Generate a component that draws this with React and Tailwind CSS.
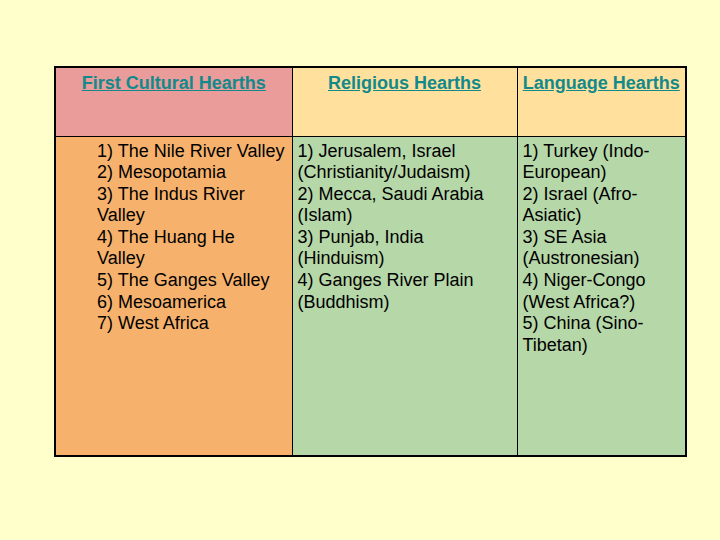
export default function App() {
  const cultural = [
    "1) The Nile River Valley",
    "2) Mesopotamia",
    "3) The Indus River Valley",
    "4) The Huang He Valley",
    "5) The Ganges Valley",
    "6) Mesoamerica",
    "7) West Africa",
  ];
  const religious = [
    "1) Jerusalem, Israel (Christianity/Judaism)",
    "2) Mecca, Saudi Arabia (Islam)",
    "3) Punjab, India (Hinduism)",
    "4) Ganges River Plain (Buddhism)",
  ];
  const language = [
    "1) Turkey (Indo-European)",
    "2) Israel (Afro-Asiatic)",
    "3) SE Asia (Austronesian)",
    "4) Niger-Congo (West Africa?)",
    "5) China (Sino-Tibetan)",
  ];

  const head = "font-bold underline text-[#12898a] text-center align-top pt-[5px] border border-black";
  const body = "align-top pt-[4px] border border-black";

  return (
    <div className="w-[720px] h-[540px] bg-[#ffffcc] pt-[66px] pl-[54px] font-['Liberation_Sans',Arial,sans-serif] text-[18px] leading-[1.2] text-black">
      <table className="table-fixed border-collapse border-2 border-black w-[631px]">
        <colgroup>
          <col className="w-[237px]" />
          <col className="w-[225px]" />
          <col className="w-[169px]" />
        </colgroup>
        <thead>
          <tr className="h-[69px]">
            <th className={`${head} bg-[#e99c9a]`}>First Cultural Hearths</th>
            <th className={`${head} bg-[#ffe09c]`}>Religious Hearths</th>
            <th className={`${head} bg-[#ffe09c]`}>Language Hearths</th>
          </tr>
        </thead>
        <tbody>
          <tr className="h-[320px]">
            <td className={`${body} bg-[#f6b26c] pl-[41px] pr-[6px]`}>
              {cultural.map((t) => (
                <div key={t}>{t}</div>
              ))}
            </td>
            <td className={`${body} bg-[#b6d7a8] px-[5px]`}>
              {religious.map((t) => (
                <div key={t}>{t}</div>
              ))}
            </td>
            <td className={`${body} bg-[#b6d7a8] px-[5px]`}>
              {language.map((t) => (
                <div key={t}>{t}</div>
              ))}
            </td>
          </tr>
        </tbody>
      </table>
    </div>
  );
}
